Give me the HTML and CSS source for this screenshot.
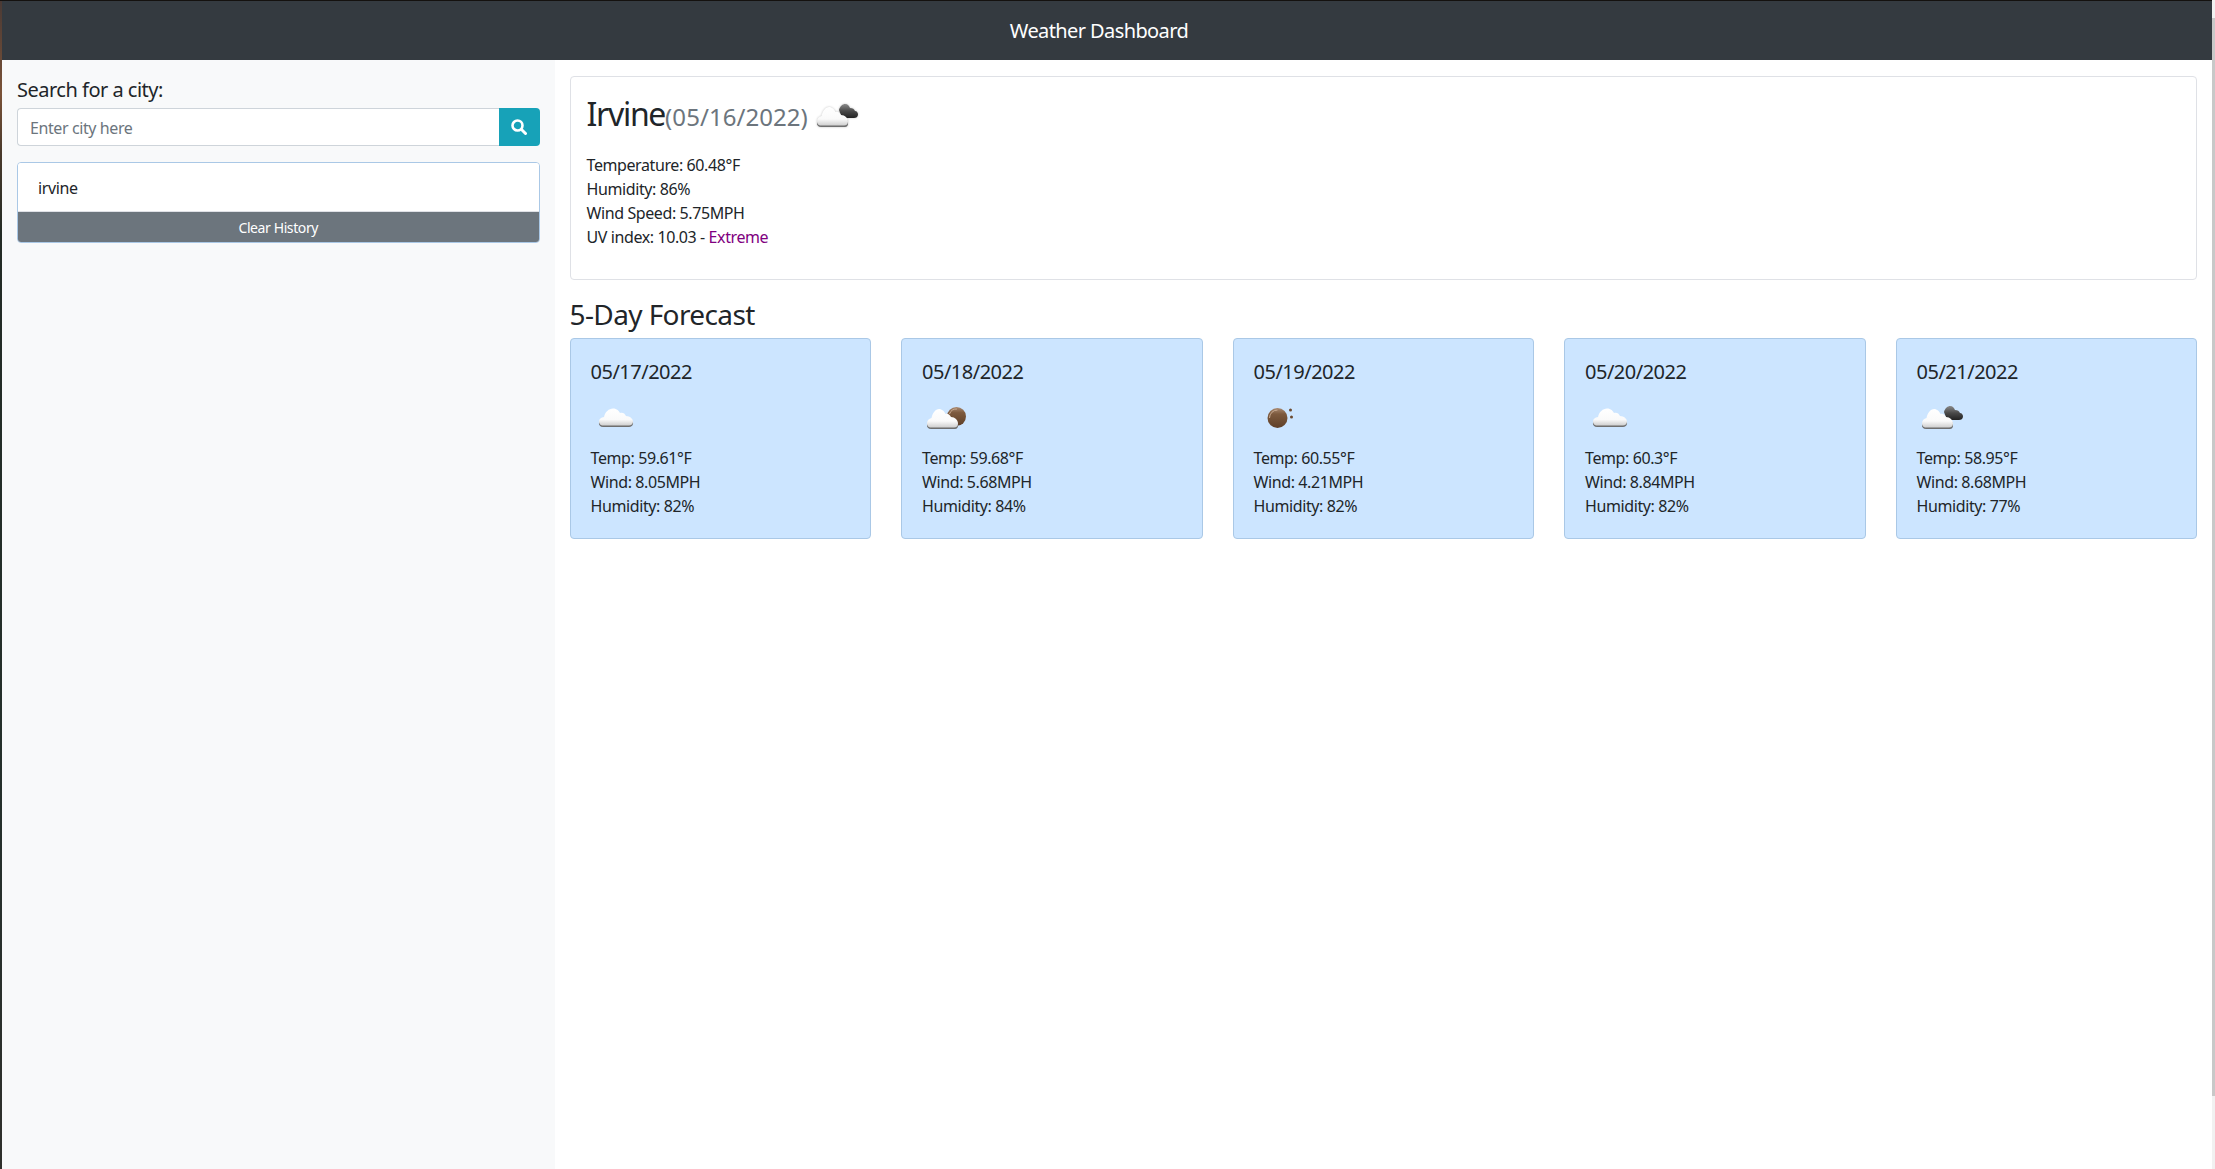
FILE: index.html
```html
<!DOCTYPE html>
<html lang="en">
<head>
    <meta charset="UTF-8">
    <meta name="viewport" content="width=device-width, initial-scale=1.0">
    <title>Weather Dashboard</title>
    <link rel="stylesheet" href="styles.css">
</head>
<body>

<svg class="icon-defs" aria-hidden="true">
    <defs>
        <linearGradient id="white-cloud" x1="0" y1="0" x2="0" y2="1">
            <stop offset="0" stop-color="#ffffff"/>
            <stop offset="0.65" stop-color="#fafafa"/>
            <stop offset="1" stop-color="#cfcfcf"/>
        </linearGradient>
        <linearGradient id="dark-cloud" x1="0" y1="0" x2="0" y2="1">
            <stop offset="0" stop-color="#8a8a8a"/>
            <stop offset="0.5" stop-color="#4a4a4a"/>
            <stop offset="1" stop-color="#222222"/>
        </linearGradient>
        <linearGradient id="moon" x1="0" y1="0" x2="0" y2="1">
            <stop offset="0" stop-color="#a98a72"/>
            <stop offset="0.3" stop-color="#7d5a3e"/>
            <stop offset="1" stop-color="#5e3f28"/>
        </linearGradient>
        <symbol id="cloud-wide" viewBox="0 0 50 50">
            <path fill="#6f6f6f" d="M12 35C9 35 8 33 8 31.500 8 29 10 27.500 13 27L38 26C40 27 42 29 42 31.500 42 33.500 40 35 38 35Z"/>
            <path fill="url(#white-cloud)" d="M12 33.500C9 33.500 8 31 8 29.500 8 27 10 25.500 13 25 14 20 18 16.500 22 16.500 26 16.500 28 19 29 21 31 20 34 21 35 24 39 24 42 27 42 29.500 42 32 40 33.500 38 33.500Z"/>
        </symbol>
        <symbol id="cloud-small" viewBox="0 0 50 50">
            <path fill="#6f6f6f" d="M9 37C6 37 5 35 5 33.500 5 31 7 30 9 29L34 29C36 30 36 32 36 33.500 36 35.500 35 37 33 37Z"/>
            <path fill="url(#white-cloud)" d="M9 35.500C6 35.500 5 33 5 31.500 5 28.500 7 26.500 9.500 26 10.500 21 13.500 17 17 17 20 17 22.500 19.500 23.500 22 25.500 21 28 22.500 29 25 33 25 36 28 36 31.500 36 34 34.500 35.500 32 35.500Z"/>
        </symbol>
        <symbol id="cloud-dark" viewBox="0 0 50 50">
            <path fill="url(#dark-cloud)" d="M27 20C28 16 31 14 33 14 36 14 37 16 38 18 41 18 42 19 43 21 45 21 46 23 46 24.500 46 27 44 28 42 28L30 28Z"/>
        </symbol>
    </defs>
</svg>

<div class="page">
    <header class="navbar">Weather Dashboard</header>

    <div class="contenido">
        <aside class="sidebar">
            <label class="search-label" for="city">Search for a city:</label>
            <div class="search-group">
                <input class="search-input" type="text" id="city" placeholder="Enter city here">
                <button class="search-btn" type="button" aria-label="Search">
                    <svg viewBox="0 0 16 16" width="16" height="16">
                        <circle cx="6.500" cy="6.500" r="5" fill="none" stroke="#fff" stroke-width="2.600"/>
                        <path d="M10.500 10.500L14.500 14.500" stroke="#fff" stroke-width="3" stroke-linecap="round"/>
                    </svg>
                </button>
            </div>
            <div class="history">
                <div class="history-item">irvine</div>
                <button class="clear-btn" type="button">Clear History</button>
            </div>
        </aside>

        <main class="main">
            <section class="today">
                <h2 class="today-title">Irvine<span class="today-date">(05/16/2022)</span>
                    <svg class="today-icon" viewBox="0 0 50 50">
                        <use href="#cloud-dark"/>
                        <use href="#cloud-small"/>
                    </svg>
                </h2>
                <p class="line">Temperature: 60.48°F</p>
                <p class="line">Humidity: 86%</p>
                <p class="line">Wind Speed: 5.75MPH</p>
                <p class="line">UV index: 10.03 - <span class="uv-extreme">Extreme</span></p>
            </section>

            <h3 class="forecast-title">5-Day Forecast</h3>
            <div class="forecast">
                <article class="day">
                    <h5 class="day-date">05/17/2022</h5>
                    <svg class="day-icon" viewBox="0 0 50 50"><use href="#cloud-wide"/></svg>
                    <p class="line">Temp: 59.61°F</p>
                    <p class="line">Wind: 8.05MPH</p>
                    <p class="line">Humidity: 82%</p>
                </article>
                <article class="day">
                    <h5 class="day-date">05/18/2022</h5>
                    <svg class="day-icon" viewBox="0 0 50 50">
                        <circle cx="34.500" cy="24.500" r="9.500" fill="url(#moon)"/>
                        <path d="M27.500 22A7.500 7.500 0 0 1 35 17" fill="none" stroke="#c9ab92" stroke-width="1"/>
                        <use href="#cloud-small"/>
                    </svg>
                    <p class="line">Temp: 59.68°F</p>
                    <p class="line">Wind: 5.68MPH</p>
                    <p class="line">Humidity: 84%</p>
                </article>
                <article class="day">
                    <h5 class="day-date">05/19/2022</h5>
                    <svg class="day-icon" viewBox="0 0 50 50">
                        <circle cx="23.500" cy="26" r="10" fill="url(#moon)"/>
                        <path d="M15.500 26A8 8 0 0 1 23.500 18" fill="none" stroke="#c9ab92" stroke-width="1"/>
                        <circle cx="36.500" cy="18" r="1.500" fill="#6b4a30"/>
                        <circle cx="37.500" cy="25" r="1.500" fill="#6b4a30"/>
                    </svg>
                    <p class="line">Temp: 60.55°F</p>
                    <p class="line">Wind: 4.21MPH</p>
                    <p class="line">Humidity: 82%</p>
                </article>
                <article class="day">
                    <h5 class="day-date">05/20/2022</h5>
                    <svg class="day-icon" viewBox="0 0 50 50"><use href="#cloud-wide"/></svg>
                    <p class="line">Temp: 60.3°F</p>
                    <p class="line">Wind: 8.84MPH</p>
                    <p class="line">Humidity: 82%</p>
                </article>
                <article class="day">
                    <h5 class="day-date">05/21/2022</h5>
                    <svg class="day-icon" viewBox="0 0 50 50">
                        <use href="#cloud-dark"/>
                        <use href="#cloud-small"/>
                    </svg>
                    <p class="line">Temp: 58.95°F</p>
                    <p class="line">Wind: 8.68MPH</p>
                    <p class="line">Humidity: 77%</p>
                </article>
            </div>
        </main>
    </div>
</div>

<div class="scroll-track"><div class="scroll-thumb"></div></div>

</body>
</html>
```

FILE: styles.css
```css
* {
    box-sizing: border-box;
}
html, body {
    height: 100%;
}
body {
    margin: 0;
    padding: 1px 3px 0 2px;
    font-family: "Noto Sans", "Open Sans", sans-serif;
    font-size: 16px;
    line-height: 24px;
    letter-spacing: -0.4px;
    color: #212529;
    background: linear-gradient(#14110f 1px, #4a3a35 1px, #7a5238 8%, #4a3a2c 13%, #232b25 20%, #25302b 70%, #2f302c 100%);
    overflow: hidden;
}
.icon-defs {
    position: absolute;
    width: 0;
    height: 0;
}
.page {
    display: flex;
    flex-direction: column;
    height: 100%;
    background-color: #ffffff;
}
.navbar {
    height: 59px;
    flex: none;
    display: flex;
    align-items: center;
    justify-content: center;
    padding-right: 16px;
    background-color: #343a40;
    color: #ffffff;
    font-size: 20px;
    letter-spacing: -0.6px;
}
.contenido {
    flex: 1;
    display: flex;
}
.sidebar {
    width: 552.5px;
    flex: none;
    padding: 15px 15px 12px;
    background-color: #f8f9fa;
}
.search-label {
    display: block;
    font-size: 20px;
    line-height: 30px;
    letter-spacing: -0.5px;
    margin-bottom: 3px;
}
.search-group {
    display: flex;
    height: 38px;
}
.search-input {
    flex: 1;
    min-width: 0;
    padding: 2px 12px 0;
    border: 1px solid #ced4da;
    border-right: none;
    border-radius: 4px 0 0 4px;
    font-family: inherit;
    font-size: 16px;
    letter-spacing: inherit;
}
.search-input::placeholder {
    color: #6c757d;
    opacity: 1;
}
.search-btn {
    width: 41px;
    border: none;
    border-radius: 0 4px 4px 0;
    background-color: #17a2b8;
    display: flex;
    align-items: center;
    justify-content: center;
    padding: 0;
}
.history {
    margin-top: 16px;
    border: 1px solid #aac8e6;
    border-radius: 4px;
    overflow: hidden;
}
.history-item {
    padding: 13px 20px 11px;
    background-color: #ffffff;
    border-bottom: 1px solid #dfe1e6;
}
.clear-btn {
    display: block;
    width: 100%;
    height: 30px;
    border: none;
    background-color: #6c757d;
    color: #ffffff;
    font-family: inherit;
    font-size: 14px;
    letter-spacing: inherit;
}
.main {
    flex: 1;
    padding: 16px 15px;
}
.today {
    height: 204px;
    padding: 13px 16px 16px;
    border: 1px solid #dfe1e6;
    border-radius: 4px;
}
.today-title {
    margin: 0 0 25px;
    height: 38px;
    font-size: 32px;
    line-height: 38px;
    font-weight: 400;
    letter-spacing: -1.3px;
}
.today-date {
    font-size: 24px;
    color: #6c757d;
    letter-spacing: 0.05px;
}
.today-icon {
    width: 50px;
    height: 50px;
    margin-left: -3px;
    vertical-align: -14px;
    filter: drop-shadow(0 0 1px #c4c4c4);
}
.line {
    margin: 0;
}
.uv-extreme {
    color: #800080;
}
.forecast-title {
    margin: 16px 0 6px;
    font-size: 28px;
    line-height: 36px;
    font-weight: 400;
    letter-spacing: -0.6px;
}
.forecast {
    display: grid;
    grid-template-columns: repeat(5, 1fr);
    gap: 30px;
}
.day {
    height: 201px;
    padding: 21px 20px 20px;
    border: 1px solid #aac8e6;
    border-radius: 4px;
    background-color: #cce5ff;
}
.day-date {
    margin: 0;
    font-size: 20px;
    line-height: 24px;
    font-weight: 400;
    letter-spacing: -0.5px;
}
.day-icon {
    display: block;
    width: 50px;
    height: 50px;
    margin: 8px 0 4px;
}
.scroll-track {
    position: fixed;
    top: 0;
    right: 0;
    width: 3px;
    height: 100%;
    background-color: #f1f1f1;
}
.scroll-thumb {
    position: absolute;
    top: 18px;
    left: 0;
    width: 3px;
    height: 1078px;
    background-color: #c8c8c8;
}
```
